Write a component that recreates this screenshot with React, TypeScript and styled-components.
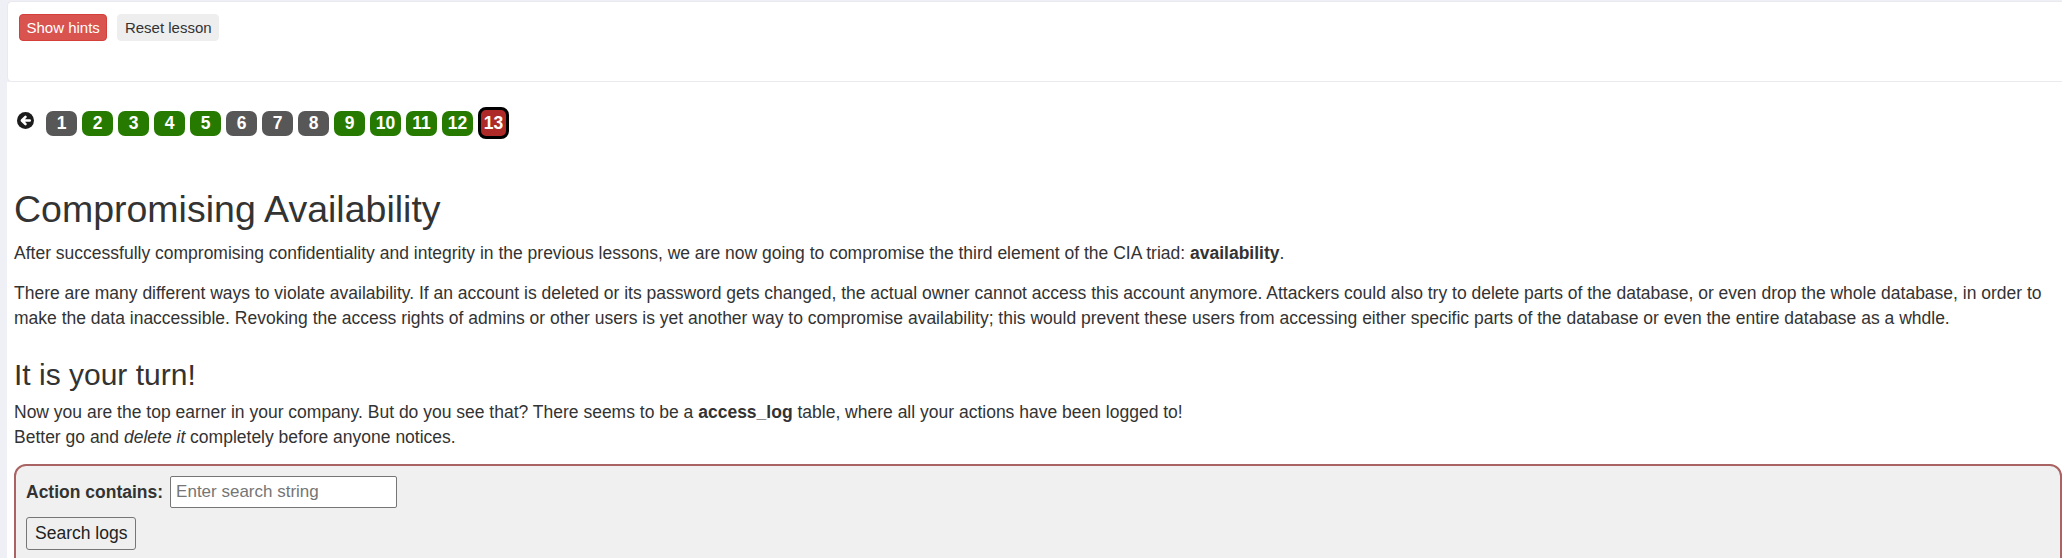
import styled, { createGlobalStyle } from "styled-components";

const GlobalStyle = createGlobalStyle`
  html, body {
    margin: 0;
    background-color: #eff0f5;
    font-family: "Liberation Sans", Arial, sans-serif;
    color: #333;
  }
`;

const Page = styled.div`
  padding: 1px 0 0 7px;
  min-height: 100vh;
  box-sizing: border-box;
  display: flex;
  flex-direction: column;
`;

const Toolbar = styled.div`
  box-sizing: border-box;
  height: 81px;
  background-color: #fff;
  border: 1px solid #e9e9ee;
  border-right: 0;
  border-radius: 5px 0 0 5px;
  padding: 12px 11px;
  display: flex;
  align-items: flex-start;
  gap: 10px;
`;

const ToolButton = styled.button<{ $danger?: boolean }>`
  height: 27px;
  padding: 0 6.5px;
  font-family: inherit;
  font-size: 15px;
  border: 1px solid ${(p) => (p.$danger ? "#d43f3a" : "#eee")};
  border-radius: 4px;
  background-color: ${(p) => (p.$danger ? "#d9534f" : "#eee")};
  color: ${(p) => (p.$danger ? "#fff" : "#333")};
  cursor: pointer;
`;

const Main = styled.main`
  flex: 1;
  background-color: #fff;
  padding: 0 0 0 7px;
`;

const LessonNav = styled.nav`
  display: flex;
  align-items: center;
  gap: 5px;
  margin-top: 25px;
  height: 32px;
`;

const BackIcon = styled.svg`
  align-self: flex-start;
  margin: 5px 7px 0 3px;
  width: 17px;
  height: 17px;
`;

type Status = "done" | "todo" | "current";

const badgeColors: Record<Status, string> = {
  done: "#267a00",
  todo: "#575757",
  current: "#ae2a28",
};

const PageBadge = styled.a<{ $status: Status }>`
  box-sizing: border-box;
  width: 31px;
  height: ${(p) => (p.$status === "current" ? "32px" : "25px")};
  border-radius: ${(p) => (p.$status === "current" ? "8px" : "7px")};
  border: ${(p) => (p.$status === "current" ? "3px solid #000" : "0")};
  background-color: ${(p) => badgeColors[p.$status]};
  color: #fff;
  font-size: 17.5px;
  font-weight: 700;
  display: flex;
  align-items: center;
  justify-content: center;
  text-decoration: none;
  cursor: pointer;
`;

const Title = styled.h1`
  margin: 50px 0 11px;
  font-size: 37.5px;
  line-height: 41px;
  font-weight: 400;
`;

const SubTitle = styled.h2`
  margin: 27px 0 8px;
  font-size: 30px;
  line-height: 34px;
  font-weight: 400;
`;

const Text = styled.p`
  margin: 0 0 15px;
  font-size: 17.5px;
  line-height: 25px;
`;

const SearchForm = styled.form`
  margin-top: -1px;
  background-color: #f0f0f0;
  border: 2px solid #a96363;
  border-radius: 12px 12px 0 0;
  padding: 10px 10px 12px;
  display: flex;
  flex-direction: column;
  align-items: flex-start;
  gap: 9px;
`;

const FieldRow = styled.div`
  display: flex;
  align-items: center;
  gap: 7px;
`;

const FieldLabel = styled.label`
  font-size: 17.5px;
  font-weight: 700;
`;

const SearchInput = styled.input`
  box-sizing: border-box;
  width: 227px;
  height: 32px;
  padding: 1px 5px;
  border: 1px solid #767676;
  border-radius: 2px;
  font-family: inherit;
  font-size: 17px;
  color: #333;
  &::placeholder {
    color: #757575;
  }
`;

const SubmitButton = styled.button`
  height: 33px;
  padding: 0 8px;
  font-family: inherit;
  font-size: 17.5px;
  color: #222;
  background-color: #efefef;
  border: 1px solid #767676;
  border-radius: 3px;
`;

const pages: Status[] = [
  "todo",
  "done",
  "done",
  "done",
  "done",
  "todo",
  "todo",
  "todo",
  "done",
  "done",
  "done",
  "done",
  "current",
];

export default function App() {
  return (
    <>
      <GlobalStyle />
      <Page>
        <Toolbar>
          <ToolButton $danger>Show hints</ToolButton>
          <ToolButton>Reset lesson</ToolButton>
        </Toolbar>
        <Main>
          <LessonNav>
            <BackIcon viewBox="0 0 16 16">
              <circle cx="8" cy="8" r="8" fill="#1c1c1c" />
              <path
                d="M12 8H5.2M8 4.6 4.6 8 8 11.4"
                stroke="#fff"
                strokeWidth="2.4"
                fill="none"
                strokeLinecap="round"
                strokeLinejoin="round"
              />
            </BackIcon>
            {pages.map((status, i) => (
              <PageBadge key={i} $status={status}>
                {i + 1}
              </PageBadge>
            ))}
          </LessonNav>

          <Title>Compromising Availability</Title>
          <Text>
            After successfully compromising confidentiality and integrity in the
            previous lessons, we are now going to compromise the third element of
            the CIA triad: <b>availability</b>.
          </Text>
          <Text>
            There are many different ways to violate availability. If an account
            is deleted or its password gets changed, the actual owner cannot
            access this account anymore. Attackers could also try to delete parts
            of the database, or even drop the whole database, in order to make the
            data inaccessible. Revoking the access rights of admins or other users
            is yet another way to compromise availability; this would prevent
            these users from accessing either specific parts of the database or
            even the entire database as a whdle.
          </Text>

          <SubTitle>It is your turn!</SubTitle>
          <Text>
            Now you are the top earner in your company. But do you see that? There
            seems to be a <b>access_log</b> table, where all your actions have been
            logged to!
            <br />
            Better go and <i>delete it</i> completely before anyone notices.
          </Text>

          <SearchForm onSubmit={(e) => e.preventDefault()}>
            <FieldRow>
              <FieldLabel htmlFor="action">Action contains:</FieldLabel>
              <SearchInput id="action" placeholder="Enter search string" />
            </FieldRow>
            <SubmitButton type="submit">Search logs</SubmitButton>
          </SearchForm>
        </Main>
      </Page>
    </>
  );
}
